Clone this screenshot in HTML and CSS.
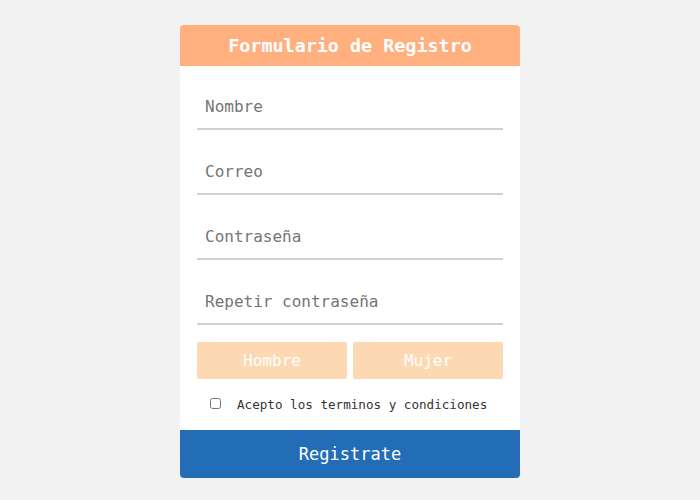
FILE: index.html
```html
<!DOCTYPE html>
<html lang="es">
<head>
<meta charset="utf-8">
<title>Formulario de Registro</title>
<link rel="stylesheet" href="styles.css">
</head>
<body>
<div class="page">
  <form class="card">
    <h1 class="title">Formulario de Registro</h1>
    <div class="fields">
      <input class="field" type="text" placeholder="Nombre">
      <input class="field" type="email" placeholder="Correo">
      <input class="field" type="password" placeholder="Contraseña">
      <input class="field" type="password" placeholder="Repetir contraseña">
      <div class="genders">
        <button type="button" class="gender">Hombre</button>
        <button type="button" class="gender">Mujer</button>
      </div>
      <label class="terms"><input type="checkbox" class="check"><span>Acepto los terminos y condiciones</span></label>
    </div>
    <button type="submit" class="submit">Registrate</button>
  </form>
</div>
</body>
</html>
```
FILE: styles.css
```css
* { box-sizing: border-box; }
html, body { margin: 0; padding: 0; }
body {
  background: #f2f2f2;
  font-family: "DejaVu Sans Mono", "Liberation Mono", monospace;
}
.page {
  display: flex;
  justify-content: center;
  padding-top: 25px;
}
.card {
  width: 340px;
  background: #ffffff;
  border-radius: 4px;
  overflow: hidden;
  display: flex;
  flex-direction: column;
}
.title {
  margin: 0;
  height: 41px;
  background: #ffb07e;
  color: #ffffff;
  font-size: 18.4px;
  font-weight: bold;
  display: flex;
  align-items: center;
  justify-content: center;
}
.fields {
  padding: 0 17px;
  display: flex;
  flex-direction: column;
}
.field {
  margin-top: 18px;
  height: 46px;
  border: none;
  border-bottom: 2px solid #cfcfcf;
  padding: 0 8px;
  font-family: inherit;
  font-size: 16px;
  color: #333;
  outline: none;
  background: transparent;
}
.field + .field { margin-top: 19px; }
.field::placeholder { color: #757575; }
.genders {
  margin-top: 17px;
  display: flex;
  gap: 6px;
}
.gender {
  flex: 1;
  height: 37px;
  border: none;
  border-radius: 2px;
  background: #fdd9b3;
  color: #ffffff;
  font-family: inherit;
  font-size: 16px;
  padding: 0;
}
.terms {
  height: 51px;
  display: flex;
  align-items: center;
  font-size: 12.6px;
  color: #333;
}
.check {
  width: 11px;
  height: 11px;
  margin: 0 16px 0 13px;
  position: relative;
  top: -1px;
}
.submit {
  height: 48px;
  border: none;
  background: #236db6;
  color: #ffffff;
  font-family: inherit;
  font-size: 17px;
  padding: 0;
}
```
